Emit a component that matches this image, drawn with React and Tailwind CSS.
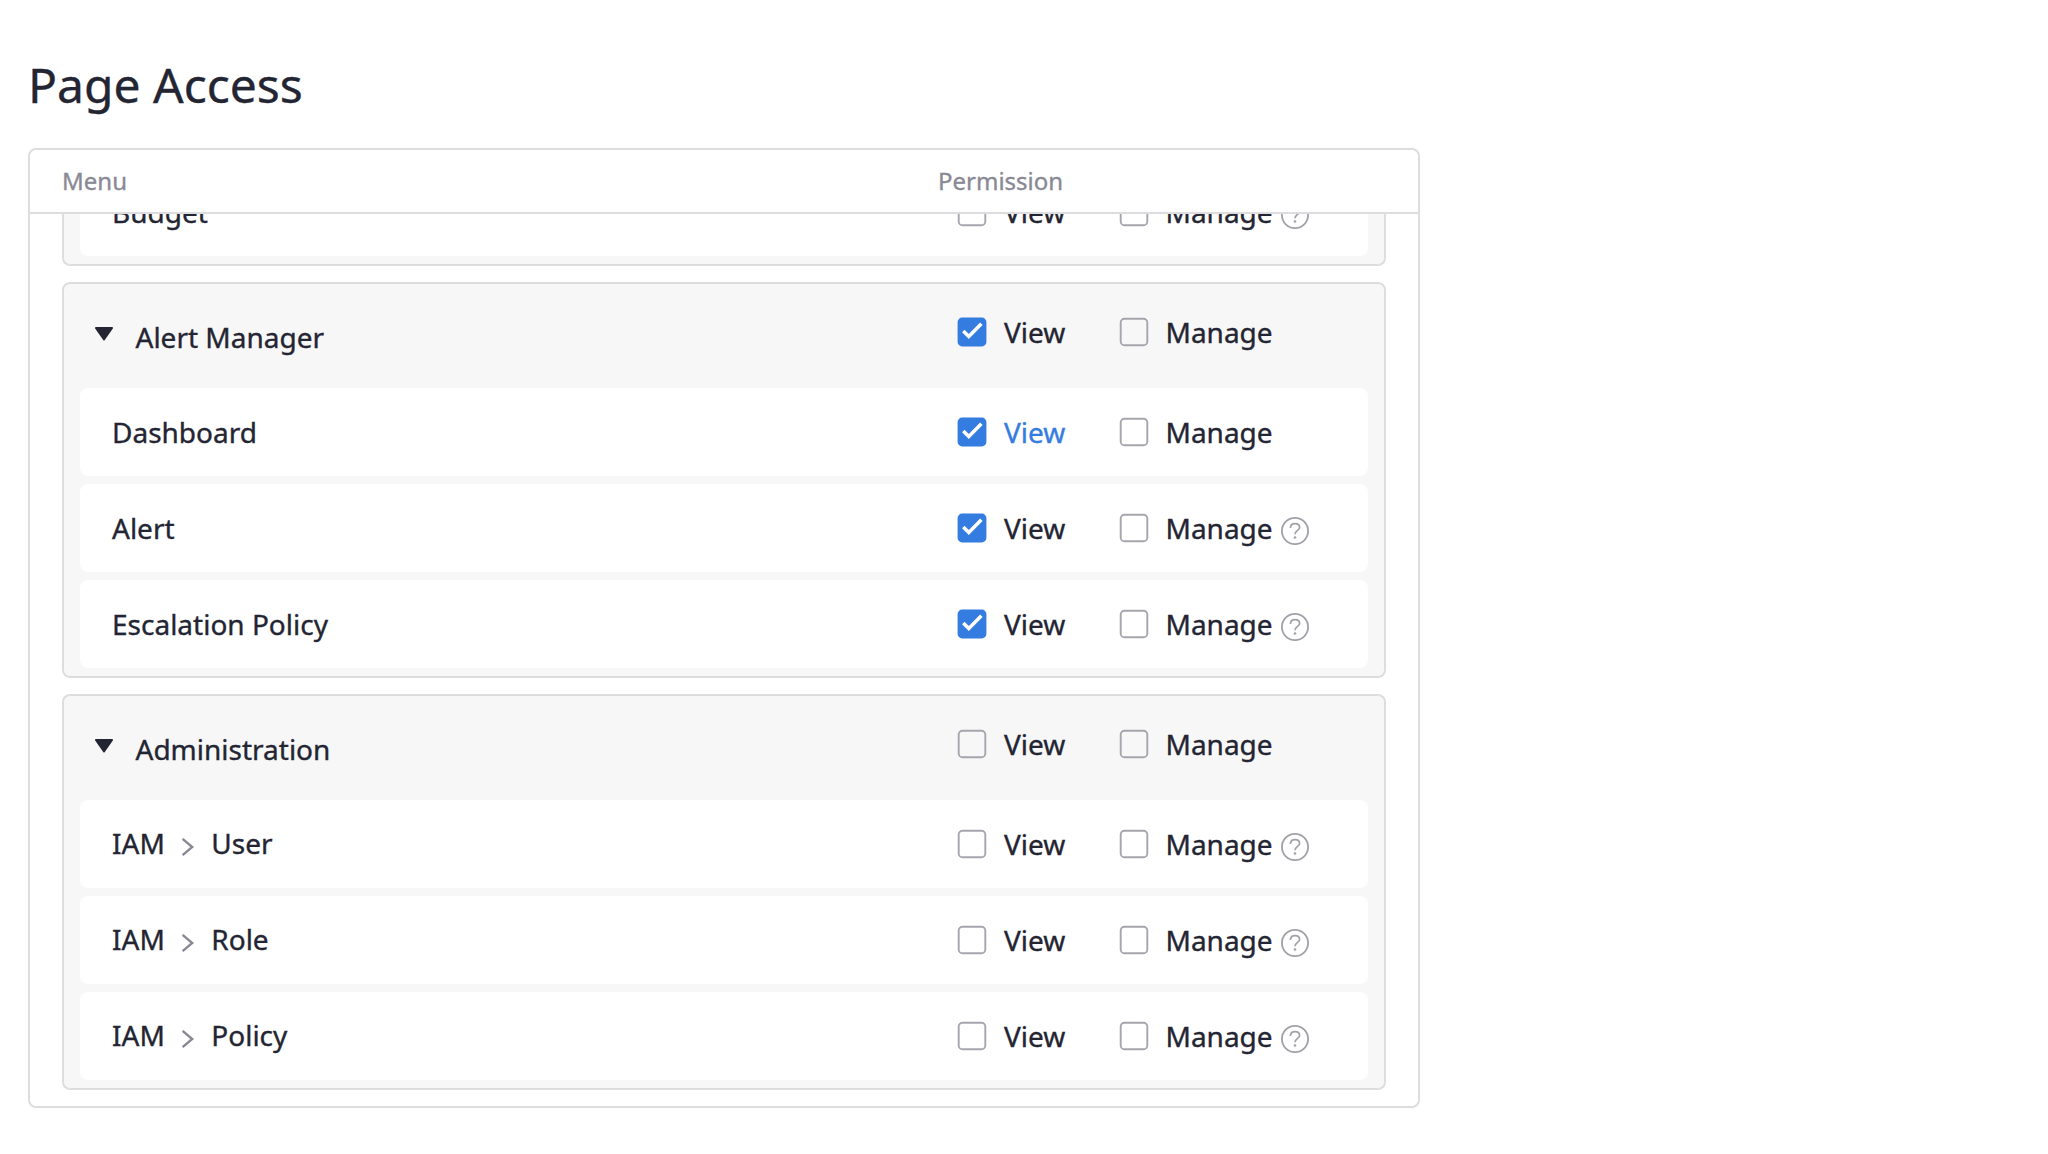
const groups = [
  {
    id: 'cost',
    items: [{ path: ['Budget'], view: false, help: true }],
  },
  {
    id: 'alert',
    name: 'Alert Manager',
    view: true,
    items: [
      { path: ['Dashboard'], view: true, active: true },
      { path: ['Alert'], view: true, help: true },
      { path: ['Escalation Policy'], view: true, help: true },
    ],
  },
  {
    id: 'admin',
    name: 'Administration',
    view: false,
    items: [
      { path: ['IAM', 'User'], view: false, help: true },
      { path: ['IAM', 'Role'], view: false, help: true },
      { path: ['IAM', 'Policy'], view: false, help: true },
    ],
  },
];

function Checkbox({ checked }) {
  return (
    <svg className="size-8 shrink-0" viewBox="0 0 32 32" fill="none">
      {checked ? (
        <>
          <rect x="1.6" y="1.6" width="28.8" height="28.8" rx="4.5" fill="#357ce1" />
          <path d="M7.3 15L12.8 20.5L25.4 7.8" stroke="#fff" strokeWidth="3.5" />
        </>
      ) : (
        <rect x="2.7" y="2.7" width="26.6" height="26.6" rx="3.8" stroke="#a5a5ae" strokeWidth="1.9" />
      )}
    </svg>
  );
}

function HelpIcon() {
  return (
    <svg className="mt-1.5 ml-1.5 size-8 shrink-0" viewBox="0 0 32 32" fill="none" stroke="#a1a1a9">
      <circle cx="16" cy="16" r="13.1" strokeWidth="1.8" />
      <path d="M11.4 13C11.4 10 13.4 8.6 16 8.6S20.6 10 20.6 12.4C20.6 15.4 16 15.4 16 19.3" strokeWidth="1.7" />
      <circle cx="16" cy="22.5" r="1.3" fill="#a1a1a9" stroke="none" />
    </svg>
  );
}

function Permissions({ view, active, help }) {
  return (
    <div className="flex h-10 w-[412px] items-center">
      <div className="flex w-[162px] items-center">
        <Checkbox checked={view} />
        <span className={active ? 'ml-4 text-[#357ce1]' : 'ml-4'}>View</span>
      </div>
      <Checkbox checked={false} />
      <span className="ml-[15.5px]">Manage</span>
      {help && <HelpIcon />}
    </div>
  );
}

function Row({ item }) {
  return (
    <div className="flex h-[88px] items-center justify-between rounded-lg bg-white pl-8">
      {item.path.length > 1 ? (
        <div className="flex items-center pb-0.5">
          <span>{item.path[0]}</span>
          <svg className="mt-2 mr-[11.5px] ml-[11px] size-6" viewBox="0 0 24 24" fill="none">
            <path d="M6.6 3.9L16.2 12L6.6 20.1" stroke="#898995" strokeWidth="2.4" />
          </svg>
          <span>{item.path[1]}</span>
        </div>
      ) : (
        <span>{item.path[0]}</span>
      )}
      <Permissions view={item.view} active={item.active} help={item.help} />
    </div>
  );
}

function Group({ group }) {
  return (
    <section className="shrink-0 rounded-lg border-2 border-[#dddddf] bg-[#f7f7f7] px-4 pb-2">
      {group.name && (
        <div className="flex h-[104px] justify-between pt-7">
          <div className="flex pl-[15px]">
            <svg className="mt-[15px] h-[14px] w-[18px]" viewBox="0 0 18 14">
              <path d="M0.6 0H17.4Q18.4 .6 17.7 1.7L9.8 13.1Q9 14.1 8.2 13.1L.3 1.7Q-.4 .6 .6 0Z" fill="#232533" />
            </svg>
            <span className="mt-[5px] ml-[22.5px]">{group.name}</span>
          </div>
          <Permissions view={group.view} />
        </div>
      )}
      <div className="flex flex-col gap-2">
        {group.items.map((item) => (
          <Row key={item.path.join('/')} item={item} />
        ))}
      </div>
    </section>
  );
}

export default function App() {
  return (
    <main className="h-[1154px] overflow-hidden bg-white pt-[55px] pl-7 font-['Noto_Sans',sans-serif] text-[28px] leading-10 text-[#232533] [-webkit-text-stroke:0.35px]">
      <h1 className="h-[93px] text-[48px] leading-[60px]">Page Access</h1>
      <div className="flex h-[960px] w-[1392px] flex-col overflow-hidden rounded-lg border-2 border-[#dddddf]">
        <div className="flex h-16 shrink-0 items-center border-b-2 border-[#dddddf] pl-8 text-2xl text-[#898995]">
          <span className="w-[876px]">Menu</span>
          <span>Permission</span>
        </div>
        <div className="flex min-h-0 flex-1 flex-col justify-end gap-4 overflow-hidden px-8 pb-4">
          {groups.map((group) => (
            <Group key={group.id} group={group} />
          ))}
        </div>
      </div>
    </main>
  );
}
